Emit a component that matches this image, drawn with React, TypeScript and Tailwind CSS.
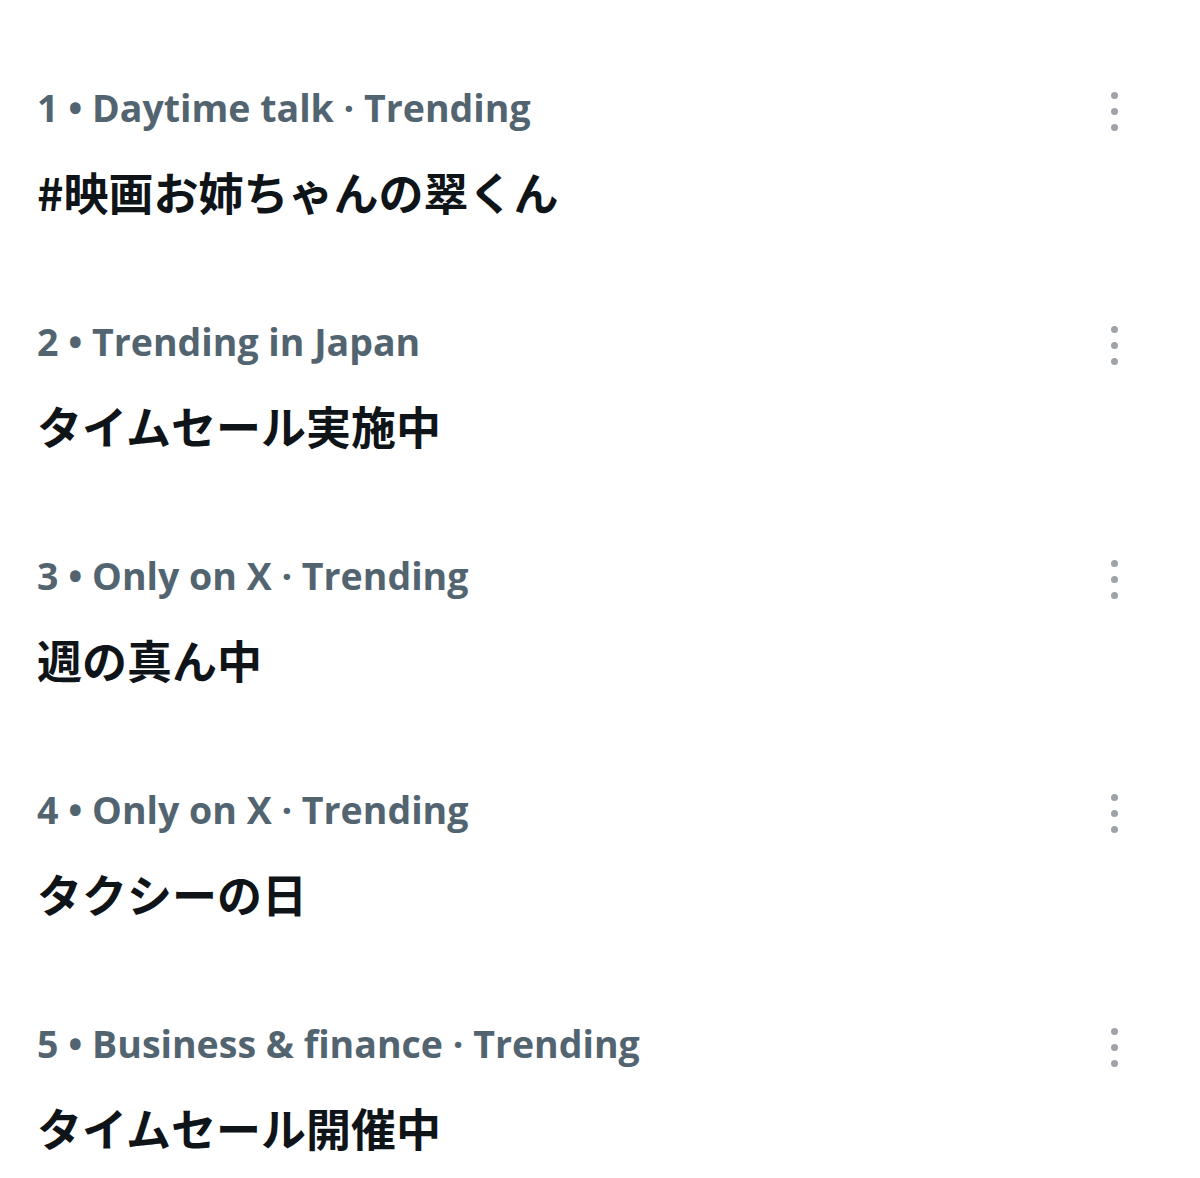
import React from "react";

interface Trend {
  rank: number;
  context: string;
  title: string;
}

const trends: Trend[] = [
  { rank: 1, context: "Daytime talk · Trending", title: "#映画お姉ちゃんの翠くん" },
  { rank: 2, context: "Trending in Japan", title: "タイムセール実施中" },
  { rank: 3, context: "Only on X · Trending", title: "週の真ん中" },
  { rank: 4, context: "Only on X · Trending", title: "タクシーの日" },
  { rank: 5, context: "Business & finance · Trending", title: "タイムセール開催中" },
];

const MoreDots = () => (
  <div className="flex flex-col items-center gap-[9px] pt-[8px]">
    <span className="block size-[7px] rounded-full bg-[#9da3a8]" />
    <span className="block size-[7px] rounded-full bg-[#9da3a8]" />
    <span className="block size-[7px] rounded-full bg-[#9da3a8]" />
  </div>
);

const TrendRow = ({ trend }: { trend: Trend }) => {
  return (
    <div className="flex items-start justify-between py-[48px]">
      <div className="flex flex-col gap-[30px]">
        <p className="text-[37.5px] leading-[48px] font-bold text-[#536471] font-['Open_Sans','Lato',sans-serif]">
          {trend.rank} • {trend.context}
        </p>
        <h2 className="text-[45px] leading-[60px] font-bold text-[#0f1419] font-['Noto_Sans_CJK_JP','Noto_Sans',sans-serif]">
          {trend.title}
        </h2>
      </div>
      <MoreDots />
    </div>
  );
};

export default function App() {
  return (
    <div className="min-h-[1178px] w-[1200px] bg-white pl-[37px] pr-[82px] pt-[36px]">
      {trends.map((t) => (
        <TrendRow key={t.rank} trend={t} />
      ))}
    </div>
  );
}
